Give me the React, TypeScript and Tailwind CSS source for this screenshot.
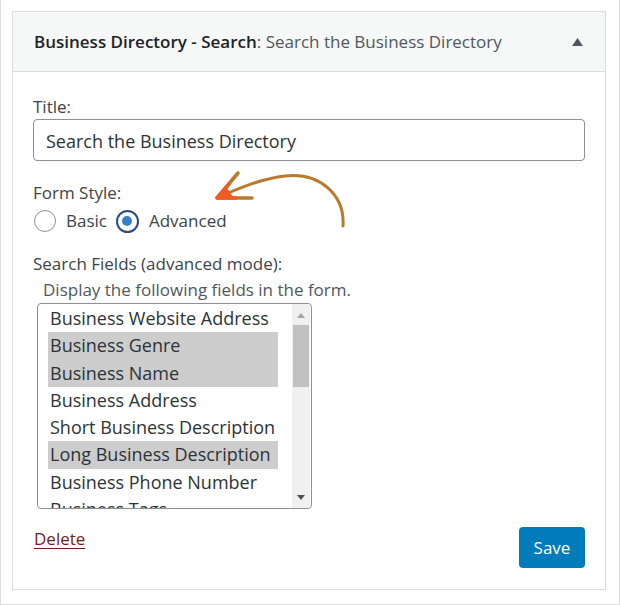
import React, { FC } from "react";

const fields = [
  { label: "Business Website Address", selected: false },
  { label: "Business Genre", selected: true },
  { label: "Business Name", selected: true },
  { label: "Business Address", selected: false },
  { label: "Short Business Description", selected: false },
  { label: "Long Business Description", selected: true },
  { label: "Business Phone Number", selected: false },
  { label: "Business Tags", selected: false },
];

const App: FC = () => {
  return (
    <div className="w-[621px] h-[605px] bg-white text-[#3c434a] font-['Open_Sans',_'Noto_Sans',_sans-serif]">
      <div className="w-[620px] h-[605px] border-x border-b border-[#dcdcde] pt-[11px] pl-[11px]">
        {/* widget box */}
        <div className="w-[594px] h-[579px] border border-[#dcdcde] bg-white flex flex-col">
          <div className="h-[60px] shrink-0 bg-[#f6f7f7] border-b border-[#dcdcde] flex items-center justify-between pl-[21px] pr-[22px] pt-[1px]">
            <div className="text-[17px] leading-6 whitespace-nowrap">
              <span className="font-semibold text-[#1d2327]">Business Directory - Search</span>
              <span className="text-[#50575e]">: Search the Business Directory</span>
            </div>
            <svg width="11" height="8" viewBox="0 0 11 8">
              <polygon points="5.5,0 11,8 0,8" fill="#50575e" />
            </svg>
          </div>

          <div className="relative px-5 pt-[23px] text-[17px] leading-6">
            <div>Title:</div>
            <div className="h-[42px] border border-[#8c8f94] rounded-[4px] flex items-center pl-[12px] pt-[1px] text-[18px] text-[#2c3338]">
              Search the Business Directory
            </div>

            <div className="mt-[20px]">Form Style:</div>
            <div className="mt-[4px] h-6 flex items-center">
              <span className="ml-[1px] w-[22px] h-[22px] rounded-full border border-[#8c8f94] bg-white" />
              <span className="ml-[10px]">Basic</span>
              <span className="ml-[9px] w-[23px] h-[23px] rounded-full border-[2.5px] border-[#2a4d7d] bg-white flex items-center justify-center">
                <span className="w-[10px] h-[10px] rounded-full bg-[#3a7fc4]" />
              </span>
              <span className="ml-[10px]">Advanced</span>
            </div>

            {/* hand-drawn arrow */}
            <svg
              className="absolute left-[187px] top-[93px]"
              width="160"
              height="75"
              viewBox="0 0 160 75"
              fill="none"
            >
              <path
                d="M143,61 C145,30 120,7 85,11 C60,14 40,23 19,32"
                stroke="#b97a2b"
                strokeWidth="3"
                strokeLinecap="round"
              />
              <path
                d="M38,8 L17,33 L52,33"
                stroke="#b97a2b"
                strokeWidth="3.5"
                strokeLinecap="round"
                strokeLinejoin="round"
              />
              <path
                d="M29,19 L17,33 L36,33"
                stroke="#f05a23"
                strokeWidth="3.5"
                strokeLinecap="round"
                strokeLinejoin="round"
              />
              <path d="M19,32 L27,23 L33,32 Z" fill="#f05a23" />
            </svg>

            <div className="mt-[19px]">Search Fields (advanced mode):</div>
            <div className="mt-[2px] pl-[10px] text-[#50575e]">Display the following fields in the form.</div>

            <div className="mt-[1px] ml-[4px] w-[275px] h-[206px] border border-[#8c8f94] rounded-[4px] overflow-hidden flex">
              <div className="ml-[10px] w-[230px] pt-[1px] flex flex-col">
                {fields.map((f) => (
                  <div
                    key={f.label}
                    className={`h-[27.25px] shrink-0 pl-[2px] leading-[27px] text-[18px] whitespace-nowrap text-[#2c3338] ${
                      f.selected ? "bg-[#cdcdcd]" : ""
                    }`}
                  >
                    {f.label}
                  </div>
                ))}
              </div>
              <div className="ml-auto mr-[1px] w-[18px] bg-[#f0f0f0] flex flex-col items-center">
                <div className="h-[20px] flex items-center justify-center pt-[2px]">
                  <svg width="8" height="5" viewBox="0 0 8 5">
                    <polygon points="4,0 8,5 0,5" fill="#a3a3a3" />
                  </svg>
                </div>
                <div className="mt-[1px] w-[16px] h-[62px] bg-[#c1c1c1]" />
                <div className="mt-auto h-[20px] flex items-center justify-center pb-[2px]">
                  <svg width="8" height="5" viewBox="0 0 8 5">
                    <polygon points="0,0 8,0 4,5" fill="#505050" />
                  </svg>
                </div>
              </div>
            </div>

            <div className="mt-[18px] flex items-start justify-between">
              <a href="#" className="ml-[1px] text-[#6e1e1e] underline underline-offset-[3px]">
                Delete
              </a>
              <button className="w-[66px] h-[41px] rounded-[4px] bg-[#007cba] text-white text-[17px]">
                Save
              </button>
            </div>
          </div>
        </div>
      </div>
    </div>
  );
};

export default App;
